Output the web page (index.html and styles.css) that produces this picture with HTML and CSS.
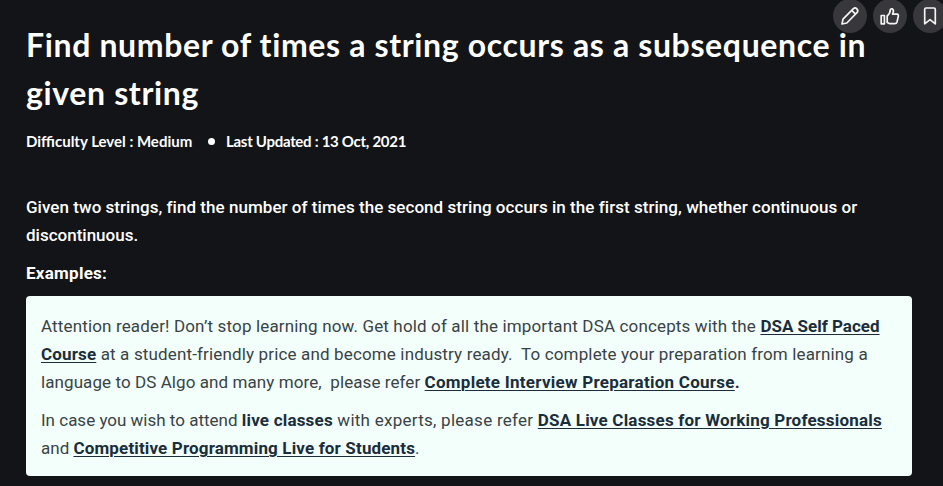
FILE: index.html
```
<!DOCTYPE html>
<html lang="en">
<head>
<meta charset="utf-8">
<title>Find number of times a string occurs as a subsequence in given string</title>
<link rel="stylesheet" href="styles.css">
</head>
<body>
<div class="actions">
  <button class="action" aria-label="Improve"><svg width="20" height="20" viewBox="0 0 20 20"><path d="M2 18 L3 13.2 L13.4 2.6 Q15.2 1.2 16.8 2.8 Q18.5 4.5 17.2 6.4 L6.8 17 Z M11.7 4.4 L15.5 8.2"/></svg></button>
  <button class="action" aria-label="Like"><svg width="20" height="20" viewBox="0 0 20 20"><path d="M1.2 9.5 H4.4 V17.8 H1.2 Z M7.2 10 Q10.3 7.4 10.3 3.8 Q10.6 2.5 12 2.8 Q14 3.7 13.2 6.2 L12.6 8.2 H17 Q18.8 8.5 18.3 10.3 L17 16 Q16.5 17.6 14.8 17.6 H9.4 L7.2 16.5 Z"/></svg></button>
  <button class="action" aria-label="Bookmark"><svg width="20" height="20" viewBox="0 0 20 20"><path d="M4.7 3.4 Q4.7 2 6.1 2 H13.9 Q15.3 2 15.3 3.4 V17.8 L10 13.6 L4.7 17.8 Z"/></svg></button>
</div>
<article class="article">
  <h1 class="title">Find number of times a string occurs as a subsequence in<br>given string</h1>
  <div class="meta"><span class="level">Difficulty Level : Medium</span><span class="dot"></span><span class="updated">Last Updated : 13 Oct, 2021</span></div>
  <div class="content">
    <p><span class="wide-1">Given two strings, find the number of times the second string occurs in the first string, whether continuous or</span><br>discontinuous.</p>
    <p><b class="wide-4">Examples:</b></p>
  </div>
  <aside class="notice">
    <p><span class="wide-2">Attention reader! Don’t stop learning now. Get hold of all the important DSA concepts with the </span><a>DSA Self Paced</a><br><a class="wide-2">Course</a><span class="wide-2"> at a student-friendly price and become industry ready.&nbsp; To complete your preparation from learning a</span><br><span class="wide-1a">language to DS Algo and many more,&nbsp; please refer </span><a class="wide-4">Complete Interview Preparation Course</a><b>.</b></p>
    <p>In case you wish to attend <b class="wide-3">live classes</b><span class="wide-4"> with experts, please refer </span><a class="wide-3">DSA Live Classes for Working Professionals</a><br>and <a class="wide-2">Competitive Programming Live for Students</a>.</p>
  </aside>
</article>
</body>
</html>
```
FILE: styles.css
```
* { box-sizing: border-box; }
body {
  margin: 0;
  background: #131417;
  color: #fff;
  font: 17px/28px Roboto, sans-serif;
  white-space: nowrap;
  overflow: hidden;
}
p { margin: 0 0 10px; }
.article {
  position: relative;
  padding: 21px 31px 10px 26px;
}
.title {
  margin: 0;
  font: 700 32px/48px Lato, sans-serif;
  letter-spacing: 0.64px;
}
.meta {
  display: flex;
  align-items: center;
  height: 28px;
  margin-top: 10px;
  font: 700 15px/28px Lato, sans-serif;
}
.level { width: 167px; }
.dot {
  width: 7px;
  height: 7px;
  margin: 0 11px 0 15px;
  border-radius: 50%;
  background: #fff;
}
.updated { letter-spacing: -0.28px; }
.content { margin-top: 38px; font-weight: 500; }
.notice {
  height: 180px;
  margin-top: -1px;
  padding: 16px 15px 14px;
  border-radius: 4px;
  background: #f3fffa;
  color: #3a4247;
}
.notice a, .notice b { font-weight: 700; color: #1b2d3a; }
.notice a {
  text-decoration: underline;
  text-decoration-thickness: 1px;
  text-underline-offset: 2px;
  text-decoration-skip-ink: auto;
}
.wide-1 { letter-spacing: 0.04px; }
.wide-1a { letter-spacing: 0.08px; }
.wide-2 { letter-spacing: 0.148px; }
.wide-3 { letter-spacing: 0.2px; }
.wide-4 { letter-spacing: 0.26px; }
.actions {
  position: absolute;
  z-index: 0;
  top: -1px;
  left: 833px;
  display: flex;
  gap: 6px;
}
.action {
  display: flex;
  align-items: center;
  justify-content: center;
  flex: none;
  width: 34px;
  height: 34px;
  padding: 0;
  border: 0;
  border-radius: 50%;
  background: #38383c;
}
.action svg {
  fill: none;
  stroke: #f4f4f4;
  stroke-width: 1.7;
  stroke-linejoin: round;
}
```
